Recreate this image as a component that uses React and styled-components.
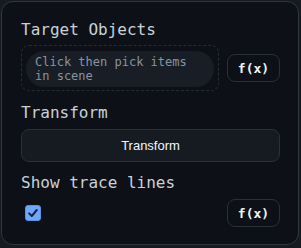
import React from "react";
import styled, { createGlobalStyle } from "styled-components";

const Global = createGlobalStyle`
  html, body { margin: 0; padding: 0; background: #161b22; }
  body { width: 301px; height: 248px; overflow: hidden; }
`;

const Panel = styled.div`
  box-sizing: border-box;
  margin: 1px 2px 3px 1px;
  width: 298px;
  height: 244px;
  border: 1px solid #30363d;
  border-radius: 12px;
  background: #0d1117;
  padding: 18px 18px 0 19px;
  display: flex;
  flex-direction: column;
  font-family: "DejaVu Sans Mono", monospace;
`;

const Heading = styled.div`
  font-size: 16px;
  line-height: 19px;
  color: #c9d1d9;
  margin-top: ${(p) => p.$mt || 0}px;
`;

const Row = styled.div`
  display: flex;
  align-items: center;
  gap: 8px;
  margin-top: ${(p) => p.$mt || 0}px;
`;

const DropZone = styled.div`
  box-sizing: border-box;
  flex: 1;
  height: 46px;
  border: 1px dashed #262c35;
  border-radius: 8px;
  padding: 5px 4px;
`;

const Pill = styled.div`
  box-sizing: border-box;
  height: 36px;
  border-radius: 18px;
  background: #181d26;
  padding: 4px 9px;
  font-size: 12px;
  line-height: 14px;
  color: #8b949e;
`;

const FxButton = styled.button`
  box-sizing: border-box;
  width: 53px;
  height: 28px;
  border: 1px solid #2a3038;
  border-radius: 8px;
  background: transparent;
  color: #f0f6fc;
  font-family: "DejaVu Sans Mono", monospace;
  font-weight: bold;
  font-size: 13px;
  padding: 0;
  flex-shrink: 0;
  margin-left: auto;
`;

const WideButton = styled.button`
  box-sizing: border-box;
  width: 100%;
  height: 33px;
  margin-top: 7px;
  border: 1px solid #2a3038;
  border-radius: 8px;
  background: #161b22;
  color: #f0f6fc;
  font-family: "Liberation Sans", Arial, sans-serif;
  font-size: 13px;
  padding: 0;
`;

const CheckBox = styled.span`
  box-sizing: border-box;
  width: 16px;
  height: 16px;
  margin-left: 4px;
  border-radius: 3px;
  background: #6ea8fe;
  border: 1px solid #5b93e6;
  display: flex;
  align-items: center;
  justify-content: center;
  flex-shrink: 0;
`;

export default function App() {
  return (
    <>
      <Global />
      <Panel>
        <Heading>Target Objects</Heading>
        <Row $mt={6}>
          <DropZone>
            <Pill>Click then pick items in scene</Pill>
          </DropZone>
          <FxButton>f(x)</FxButton>
        </Row>
        <Heading $mt={12}>Transform</Heading>
        <WideButton>Transform</WideButton>
        <Heading $mt={11}>Show trace lines</Heading>
        <Row $mt={7}>
          <CheckBox role="checkbox" aria-checked="true">
            <svg width="12" height="12" viewBox="0 0 12 12">
              <path d="M2.2 6.4 L4.8 9 L9.8 3" fill="none" stroke="#1c2430" strokeWidth="2" strokeLinecap="round" strokeLinejoin="round" />
            </svg>
          </CheckBox>
          <FxButton>f(x)</FxButton>
        </Row>
      </Panel>
    </>
  );
}
